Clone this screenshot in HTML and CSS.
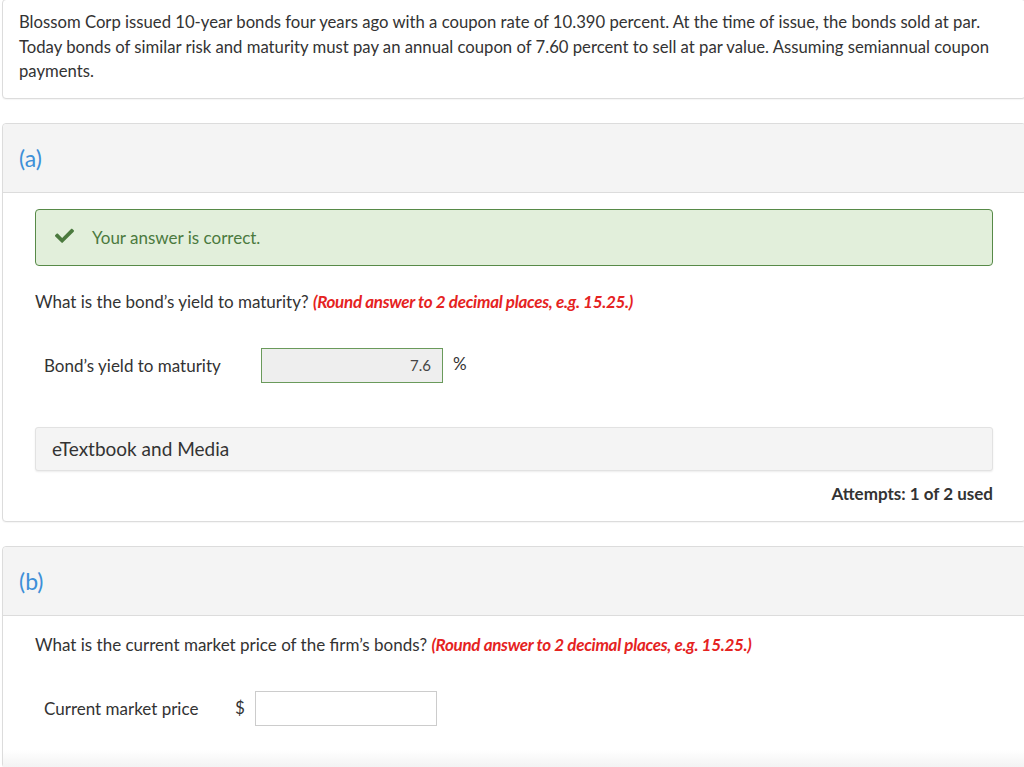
FILE: index.html
```html
<!DOCTYPE html>
<html>
<head>
<meta charset="utf-8">
<link rel="stylesheet" href="styles.css">
</head>
<body>
<div class="page">
  <div class="card intro">
    <p class="intro-text">Blossom Corp issued 10-year bonds four years ago with a coupon rate of 10.390 percent. At the time of issue, the bonds sold at par. Today bonds of similar risk and maturity must pay an annual coupon of 7.60 percent to sell at par value. Assuming semiannual coupon payments.</p>
  </div>

  <div class="card part">
    <div class="part-head"><span class="part-label">(a)</span></div>
    <div class="part-body">
      <div class="success">
        <svg class="check" viewBox="0 0 512 400" width="19" height="15"><path fill="#4b7a3e" d="M173.9 391.4 7.5 225c-10-10-10-26.2 0-36.2l36.2-36.2c10-10 26.2-10 36.2 0L192 264.7 432.1 24.6c10-10 26.2-10 36.2 0l36.2 36.2c10 10 10 26.2 0 36.2L210.1 391.4c-10 10-26.2 10-36.2 0z"/></svg>
        <span class="success-text">Your answer is correct.</span>
      </div>
      <p class="question">What is the bond’s yield to maturity? <em class="hint">(Round answer to 2 decimal places, e.g. 15.25.)</em></p>
      <div class="answer-row">
        <span class="answer-label label-a">Bond’s yield to maturity</span>
        <div class="input correct">7.6</div>
        <span class="unit">%</span>
      </div>
      <div class="media">eTextbook and Media</div>
      <div class="attempts">Attempts: 1 of 2 used</div>
    </div>
  </div>

  <div class="card part last">
    <div class="part-head"><span class="part-label">(b)</span></div>
    <div class="part-body">
      <p class="question q-b">What is the current market price of the firm’s bonds? <em class="hint">(Round answer to 2 decimal places, e.g. 15.25.)</em></p>
      <div class="answer-row">
        <span class="answer-label label-b">Current market price</span>
        <span class="currency">$</span>
        <div class="input empty"></div>
      </div>
      <div class="fade"></div>
    </div>
  </div>
</div>
</body>
</html>
```

FILE: styles.css
```css
html, body {
  margin: 0;
  padding: 0;
  background: #ffffff;
  overflow: hidden;
}
body {
  font-family: Lato, "Open Sans", sans-serif;
  color: #333333;
  font-size: 17px;
  line-height: 24px;
}
.page {
  width: 1024px;
  margin-left: 2px;
  margin-top: -1px;
}
.card {
  border: 1px solid #dcdcdc;
  border-radius: 4px;
  background: #ffffff;
  box-shadow: 0 1px 1px rgba(0,0,0,0.04);
}
.intro {
  padding: 10px 26px 14px 16px;
}
.intro-text {
  margin: 0;
  font-size: 16.7px;
  line-height: 24.5px;
}
.part {
  margin-top: 24px;
}
.part-head {
  height: 68px;
  background: #f4f4f4;
  border-bottom: 1px solid #dcdcdc;
  display: flex;
  align-items: center;
  padding-left: 16px;
  border-radius: 4px 4px 0 0;
}
.part-label {
  color: #3d8fd8;
  font-size: 23px;
  line-height: 24px;
}
.part-body {
  padding: 16px 32px 15px 32px;
}
.last .part-body {
  padding-bottom: 0;
}
.success {
  box-sizing: border-box;
  height: 57px;
  background: #e2efdb;
  border: 1px solid #578a48;
  border-radius: 4px;
  display: flex;
  align-items: center;
  padding-left: 19px;
}
.check {
  display: block;
  margin-top: -4px;
}
.success-text {
  color: #4b7a3e;
  margin-left: 18px;
  margin-top: 1px;
}
.question {
  margin: 24px 0 0 0;
}
.q-b {
  margin-top: 1px;
}
.hint {
  color: #e5231f;
  font-weight: bold;
  font-style: italic;
  letter-spacing: -0.3px;
}
.answer-row {
  display: flex;
  align-items: center;
  margin-top: 34px;
  padding-left: 9px;
}
.answer-label {
  display: inline-block;
  margin-top: 2px;
}
.label-a {
  width: 217px;
}
.label-b {
  width: 190px;
}
.input {
  box-sizing: border-box;
  width: 182px;
  height: 35px;
  font-size: 15px;
  line-height: 33px;
  text-align: right;
  padding-right: 11px;
}
.correct {
  background: #eeeeee;
  border: 1px solid #6a9a5b;
  color: #444444;
}
.empty {
  background: #ffffff;
  border: 1px solid #cccccc;
  margin-left: 10px;
}
.unit {
  margin-left: 10px;
  margin-top: -3px;
}
.currency {
  display: inline-block;
  margin-left: 1px;
}
.media {
  box-sizing: border-box;
  height: 44px;
  margin-top: 44px;
  background: #f4f4f4;
  border: 1px solid #e2e2e2;
  border-radius: 3px;
  box-shadow: 0 1px 2px rgba(0,0,0,0.08);
  font-size: 19px;
  line-height: 42px;
  padding-left: 16px;
}
.attempts {
  text-align: right;
  font-weight: bold;
  margin-top: 11px;
}
.fade {
  height: 17px;
  margin: 24px -32px 0 -32px;
  background: linear-gradient(#ffffff, #f3f3f3);
}
```
